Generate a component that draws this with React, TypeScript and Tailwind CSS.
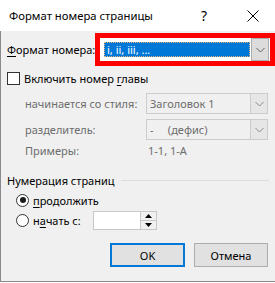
import React from "react";

const Chevron = ({ color = "#606060" }: { color?: string }) => (
  <svg width="9" height="6" viewBox="0 0 9 6">
    <path d="M0.5 1 L4.5 5 L8.5 1" fill="none" stroke={color} strokeWidth="1" />
  </svg>
);

const DisabledCombo = ({ text }: { text: React.ReactNode }) => (
  <div className="flex h-[21px] w-[122px] shrink-0 border border-[#cccccc] bg-[#f0f0f0]">
    <div className="flex flex-1 items-center pl-[3px] text-[#6d6d6d] whitespace-pre">{text}</div>
    <div className="flex w-[17px] items-center justify-center border-l border-[#cccccc] bg-[#e6e6e6]">
      <Chevron color="#8a8a8a" />
    </div>
  </div>
);

export default function App() {
  return (
    <div className="w-[275px] h-[283px] bg-white text-[11px] leading-none text-black whitespace-nowrap font-['Noto_Sans','Open_Sans',sans-serif]">
      <div className="flex h-[31px] items-center bg-white text-[11.3px]">
        <div className="pl-[9px] flex-1">Формат номера страницы</div>
        <div className="w-[14px] text-center text-[14px] mr-[36px]">?</div>
        <svg width="12" height="12" viewBox="0 0 12 12" className="mr-[16px]">
          <path d="M0.5 0.5 L11.5 11.5 M11.5 0.5 L0.5 11.5" stroke="#000" strokeWidth="1" />
        </svg>
      </div>
      <div className="h-[251px] bg-[#f0f0f0] border-l border-b border-[#8a8a8a] flex flex-col">
        <div className="mt-[2px] flex h-[33px] items-center">
          <div className="w-[94px] shrink-0 pl-[6px]">
            <span className="underline underline-offset-2">Ф</span>ормат номера:
          </div>
          <div className="border-[5px] border-[#ff0000] h-[33px] w-[180px] shrink-0 bg-white flex">
            <div className="flex flex-1 items-center pl-[4px]">
              <div className="h-[15px] w-[146px] bg-[#0078d7] border border-dotted border-[#e8b27a] text-white flex items-center pl-[2px]">
                i, ii, iii, ...
              </div>
            </div>
            <div className="w-[18px] h-[23px] border border-[#adadad] bg-[#dcdcdc] flex items-center justify-center">
              <Chevron />
            </div>
            <div className="w-[1px]" />
          </div>
        </div>

        <div className="mt-[6px] flex h-[13px] items-center pl-[6px]">
          <div className="w-[13px] h-[13px] border border-[#333333] bg-white" />
          <div className="ml-[4px]">
            Включить номер <span className="underline underline-offset-2">г</span>лавы
          </div>
        </div>

        <div className="mt-[8px] flex h-[21px] items-center">
          <div className="w-[145px] shrink-0 pl-[24px] text-[#6d6d6d]">начинается со стиля:</div>
          <DisabledCombo text="Заголовок 1" />
        </div>
        <div className="mt-[5px] flex h-[21px] items-center">
          <div className="w-[145px] shrink-0 pl-[24px] text-[#6d6d6d]">разделитель:</div>
          <DisabledCombo text={"-     (дефис)"} />
        </div>
        <div className="mt-[3px] flex h-[14px] items-center text-[#6d6d6d]">
          <div className="w-[147px] shrink-0 pl-[24px]">Примеры:</div>
          <div>1-1, 1-A</div>
        </div>

        <div className="mt-[15px] flex h-[16px] items-center pl-[6px]">
          <div>Нумерация страниц</div>
          <div className="ml-[6px] mr-[6px] flex-1 h-px bg-[#dcdcdc]" />
        </div>

        <div className="mt-[5px] flex h-[14px] items-center pl-[15px]">
          <div className="w-[13px] h-[13px] rounded-full border border-[#333333] bg-white flex items-center justify-center">
            <div className="w-[6px] h-[6px] rounded-full bg-[#1a1a1a]" />
          </div>
          <div className="ml-[4px]">
            <span className="underline underline-offset-2">п</span>родолжить
          </div>
        </div>
        <div className="mt-[4px] flex h-[19px] items-center pl-[15px]">
          <div className="w-[13px] h-[13px] rounded-full border border-[#333333] bg-white" />
          <div className="ml-[4px] w-[60px]">
            н<span className="underline underline-offset-2">а</span>чать с:
          </div>
          <div className="flex h-[19px] w-[64px] border border-[#c8c8c8] bg-white">
            <div className="flex-1" />
            <div className="flex w-[16px] flex-col border-l border-[#c8c8c8] bg-[#f0f0f0]">
              <div className="flex flex-1 items-center justify-center border-b border-[#c8c8c8]">
                <svg width="7" height="4" viewBox="0 0 7 4"><path d="M0 4 L3.5 0 L7 4 Z" fill="#000" /></svg>
              </div>
              <div className="flex flex-1 items-center justify-center">
                <svg width="7" height="4" viewBox="0 0 7 4"><path d="M0 0 L3.5 4 L7 0 Z" fill="#000" /></svg>
              </div>
            </div>
          </div>
        </div>

        <div className="mt-[13px] flex h-[24px] pl-[109px]">
          <div className="w-[75px] border-2 border-[#0078d7] bg-[#e1e1e1] flex items-center justify-center">OK</div>
          <div className="ml-[9px] w-[74px] border border-[#adadad] bg-[#e1e1e1] flex items-center justify-center">Отмена</div>
        </div>
      </div>
    </div>
  );
}
